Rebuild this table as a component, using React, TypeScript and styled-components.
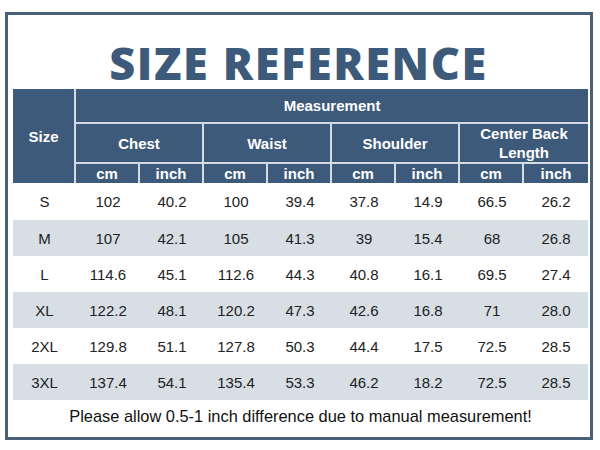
import React from "react";
import styled, { createGlobalStyle } from "styled-components";

const Global = createGlobalStyle`
  *, *::before, *::after { box-sizing: border-box; }
  html, body { margin: 0; padding: 0; background: #ffffff; }
  body { font-family: "Liberation Sans", Arial, sans-serif; }
`;

const Frame = styled.div`
  margin: 12px 0 0 5px;
  width: 588px;
  height: 428px;
  border: 3px solid #4a5f78;
  padding: 25px 2px 0 5px;
  display: flex;
  flex-direction: column;
  background: #ffffff;
`;

const Title = styled.h1`
  margin: 0 0 4px 0;
  height: 45px;
  line-height: 45px;
  font-family: "Open Sans", "DejaVu Sans", sans-serif;
  font-weight: 800;
  font-size: 45px;
  letter-spacing: 1.6px;
  color: #3e5a7a;
  text-align: center;
  padding-right: 4px;
`;

const Table = styled.table`
  width: 575px;
  table-layout: fixed;
  border-collapse: separate;
  border-spacing: 0;
  font-family: "Liberation Sans", Arial, sans-serif;
`;

const HeadCell = styled.th<{ $right?: boolean; $bottom?: boolean }>`
  background: #3e5a7a;
  color: #ffffff;
  font-weight: 700;
  font-size: 15px;
  line-height: 19px;
  padding: 0;
  text-align: center;
  vertical-align: middle;
  border-right: ${(p) => (p.$right ? "2px solid #d3dce6" : "0")};
  border-bottom: ${(p) => (p.$bottom ? "2px solid #d3dce6" : "0")};
`;

const HeadRow = styled.tr<{ $h: number }>`
  height: ${(p) => p.$h}px;
`;

const BodyRow = styled.tr<{ $alt: boolean; $h: number }>`
  height: ${(p) => p.$h}px;
  background: ${(p) => (p.$alt ? "#d7dee4" : "#ffffff")};
`;

const Cell = styled.td`
  padding: 0;
  text-align: center;
  vertical-align: middle;
  font-size: 15px;
  color: #222222;
`;

const Note = styled.div`
  flex: 1;
  display: flex;
  align-items: center;
  justify-content: center;
  font-family: "Liberation Sans", Arial, sans-serif;
  font-size: 16.4px;
  color: #111111;
  padding-bottom: 4px;
`;

const groups = ["Chest", "Waist", "Shoulder"];

const rows: string[][] = [
  ["S", "102", "40.2", "100", "39.4", "37.8", "14.9", "66.5", "26.2"],
  ["M", "107", "42.1", "105", "41.3", "39", "15.4", "68", "26.8"],
  ["L", "114.6", "45.1", "112.6", "44.3", "40.8", "16.1", "69.5", "27.4"],
  ["XL", "122.2", "48.1", "120.2", "47.3", "42.6", "16.8", "71", "28.0"],
  ["2XL", "129.8", "51.1", "127.8", "50.3", "44.4", "17.5", "72.5", "28.5"],
  ["3XL", "137.4", "54.1", "135.4", "53.3", "46.2", "18.2", "72.5", "28.5"],
];

export default function App() {
  return (
    <>
      <Global />
      <Frame>
        <Title>SIZE REFERENCE</Title>
        <Table>
          <colgroup>
            <col style={{ width: 63 }} />
            {Array.from({ length: 8 }).map((_, i) => (
              <col key={i} style={{ width: 64 }} />
            ))}
          </colgroup>
          <thead>
            <HeadRow $h={35}>
              <HeadCell rowSpan={3} $right>
                Size
              </HeadCell>
              <HeadCell colSpan={8} $bottom>
                Measurement
              </HeadCell>
            </HeadRow>
            <HeadRow $h={40}>
              {groups.map((g) => (
                <HeadCell key={g} colSpan={2} $right $bottom>
                  {g}
                </HeadCell>
              ))}
              <HeadCell colSpan={2} $bottom>
                Center Back
                <br />
                Length
              </HeadCell>
            </HeadRow>
            <HeadRow $h={18}>
              {Array.from({ length: 8 }).map((_, i) => (
                <HeadCell key={i} $right={i < 7}>
                  {i % 2 === 0 ? "cm" : "inch"}
                </HeadCell>
              ))}
            </HeadRow>
          </thead>
          <tbody>
            {rows.map((r, i) => (
              <BodyRow key={r[0]} $alt={i % 2 === 1} $h={i === 0 ? 37 : 36}>
                {r.map((v, j) => (
                  <Cell key={j}>{v}</Cell>
                ))}
              </BodyRow>
            ))}
          </tbody>
        </Table>
        <Note>Please allow 0.5-1 inch difference due to manual measurement!</Note>
      </Frame>
    </>
  );
}
